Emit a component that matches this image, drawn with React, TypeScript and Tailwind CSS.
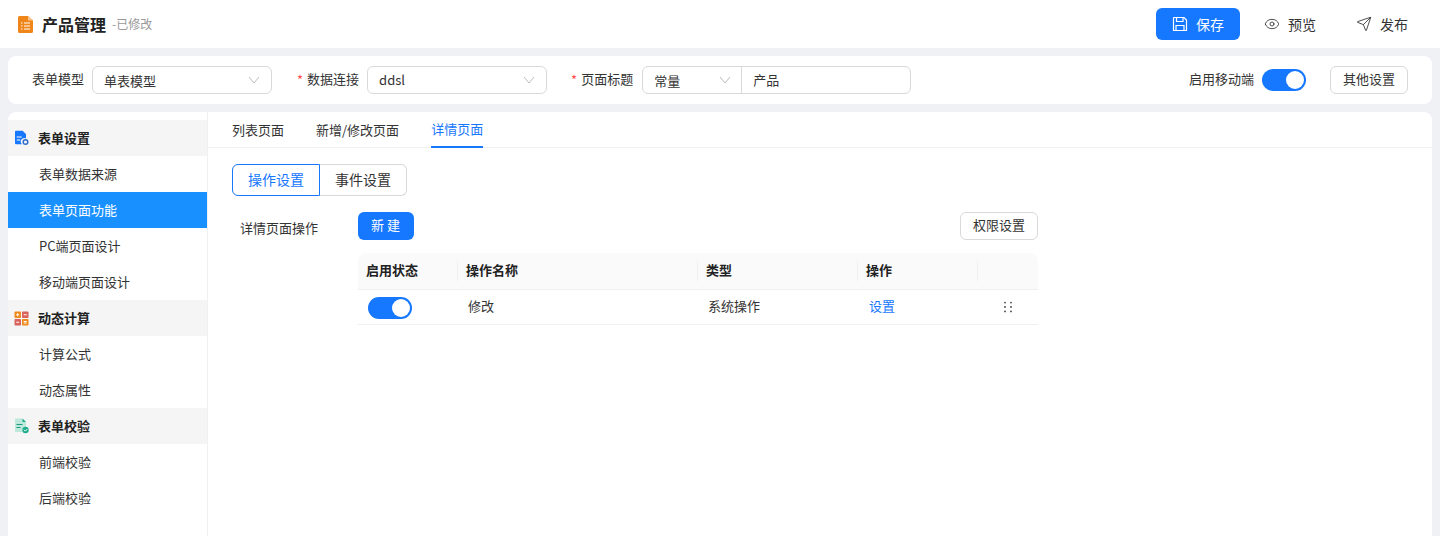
import React from "react";
import { Eye, Send } from "lucide-react";

function Chevron() {
  return (
    <svg width="12" height="8" viewBox="0 0 12 8" fill="none" stroke="#bdbdbd" strokeWidth="1" className="shrink-0">
      <path d="M1 1l5 6 5-6" />
    </svg>
  );
}

function Toggle() {
  return (
    <div className="flex h-[22px] w-[44px] items-center justify-end rounded-full bg-[#1677ff] pr-[2px]">
      <div className="h-[18px] w-[18px] rounded-full bg-white" />
    </div>
  );
}

function Select({ text, cjk }: { text: string; cjk?: boolean }) {
  return (
    <div className="flex h-[28px] w-[180px] items-center justify-between rounded-[6px] border border-[#d9d9d9] bg-white px-[11px] text-[13px] text-[#333]">
      <span className={cjk ? "pt-[2px]" : ""}>{text}</span>
      <Chevron />
    </div>
  );
}

function Req() {
  return <span className="mr-[4px] text-[13px] text-[#ff4d4f]">*</span>;
}

function Group({ icon, title }: { icon: React.ReactNode; title: string }) {
  return (
    <div className="flex h-[36px] items-center bg-[#f5f5f5] pl-[6px] text-[13px] font-bold text-[#222]">
      <span className="mr-[9px] flex w-[15px] items-center justify-center">{icon}</span>
      <span className="pb-[1px]">{title}</span>
    </div>
  );
}

function Item({ title, active }: { title: string; active?: boolean }) {
  return (
    <div className={`flex h-[36px] items-center pb-[1px] pl-[31px] text-[13px] ${active ? "bg-[#1890ff] text-white" : "text-[#333]"}`}>
      {title}
    </div>
  );
}

const FormIcon = () => (
  <svg width="16" height="16" viewBox="0 0 16 16" className="shrink-0">
    <path d="M2 .7h6.500L12 4v4.500a3.500 3.500 0 0 0-4 5.700H2a1 1 0 0 1-1-1V1.700a1 1 0 0 1 1-1z" fill="#1677ff" />
    <rect x="2.700" y="6.500" width="5" height="1" fill="#fff" />
    <rect x="2.700" y="9.500" width="3.500" height="1" fill="#fff" />
    <circle cx="11.500" cy="12" r="2.300" fill="none" stroke="#2f6fc9" strokeWidth="1.500" />
  </svg>
);

const CalcIcon = () => (
  <svg width="15" height="15" viewBox="0 0 15 15" className="shrink-0">
    <rect x="0.500" y="0.500" width="6.500" height="6.500" rx="0.800" fill="#f08a1d" />
    <rect x="8" y="0.500" width="6.500" height="6.500" rx="0.800" fill="#d9625a" />
    <rect x="0.500" y="8" width="6.500" height="6.500" rx="0.800" fill="#d9625a" />
    <rect x="8" y="8" width="6.500" height="6.500" rx="0.800" fill="#f08a1d" />
    <path d="M2.200 3.750h3M3.700 2.250v3M9.700 3.750h3M2.200 11.250h3M9.700 10.500h3M9.700 12h3" stroke="#fff" strokeWidth="1" />
  </svg>
);

const CheckIcon = () => (
  <svg width="16" height="16" viewBox="0 0 16 16" className="shrink-0">
    <path d="M1 .5h7.500L12 4v5a3.500 3.500 0 0 0-3.600 5H1z" fill="#bfe8dc" />
    <path d="M8.500 .5V4H12z" fill="#1fae8c" />
    <rect x="2.500" y="6" width="6" height="1" fill="#1b9c7e" />
    <rect x="2.500" y="9" width="4" height="1" fill="#1b9c7e" />
    <circle cx="11.500" cy="12" r="3.200" fill="#1fae8c" />
    <path d="M10 11.800l1.300 1.300 2-2" stroke="#fff" strokeWidth="1" fill="none" />
  </svg>
);

const SaveIcon = () => (
  <svg width="16" height="16" viewBox="0 0 16 16" fill="none" stroke="#fff" strokeWidth="1.200" className="shrink-0">
    <path d="M2 1.500h10L14.500 4v10.500H1.500V2z" />
    <path d="M4.500 1.500v4h6.500v-4M4 14.500V9.500h8v5" />
  </svg>
);

export default function App() {
  return (
    <div
      className="flex h-[536px] w-[1440px] flex-col overflow-hidden bg-[#f0f1f5] text-[#333]"
      style={{ fontFamily: '"Noto Sans CJK SC", "Noto Sans", sans-serif' }}
    >
      {/* Header */}
      <header className="flex h-[48px] shrink-0 items-center justify-between bg-white pl-[18px] pr-[16px]">
        <div className="flex items-center">
          <svg width="15" height="17" viewBox="0 0 15 17" className="mr-[9px]">
            <path d="M1.500 0H10l5 4.500V15.500A1.500 1.500 0 0 1 13.500 17h-12A1.500 1.500 0 0 1 0 15.500v-14A1.500 1.500 0 0 1 1.500 0z" fill="#f08519" />
            <path d="M10 0l5 4.500h-5z" fill="#f9c48d" />
            <path d="M3 7h1.500M6 7h6M3 10h1.500M6 10h6M3 13h1.500M6 13h6" stroke="#fff" strokeWidth="1.200" />
          </svg>
          <span className="pb-[1px] text-[16px] font-bold leading-none text-[#222]">产品管理</span>
          <span className="ml-[6px] text-[12px] text-[#999]">-已修改</span>
        </div>
        <div className="flex items-center text-[14px]">
          <button className="flex h-[32px] w-[84px] items-center justify-center gap-[8px] rounded-[6px] bg-[#1677ff] text-white">
            <SaveIcon />
            <span>保存</span>
          </button>
          <button className="ml-[8px] flex h-[32px] w-[84px] items-center justify-center gap-[8px] text-[#333]">
            <Eye size={16} strokeWidth={1.300} />
            <span>预览</span>
          </button>
          <button className="ml-[8px] flex h-[32px] w-[84px] items-center justify-center gap-[8px] text-[#333]">
            <Send size={16} strokeWidth={1.300} />
            <span>发布</span>
          </button>
        </div>
      </header>

      {/* Form bar */}
      <div className="mx-[8px] mt-[8px] flex h-[48px] shrink-0 items-center rounded-[8px] bg-white px-[24px] text-[13px]">
        <span className="mr-[8px] pb-[2px]">表单模型</span>
        <Select text="单表模型" cjk />
        <span className="ml-[25px]"><Req /></span>
        <span className="mr-[8px] pb-[2px]">数据连接</span>
        <Select text="ddsl" />
        <span className="ml-[24px]"><Req /></span>
        <span className="mr-[9px] pb-[2px]">页面标题</span>
        <div className="flex h-[28px] w-[269px] items-center rounded-[6px] border border-[#d9d9d9]">
          <div className="flex h-full w-[99px] items-center justify-between border-r border-[#d9d9d9] pl-[11px] pr-[10px]">
            <span className="pt-[2px]">常量</span>
            <Chevron />
          </div>
          <span className="pl-[11px]">产品</span>
        </div>
        <div className="ml-auto flex items-center">
          <span className="mr-[8px] pb-[2px]">启用移动端</span>
          <Toggle />
          <button className="ml-[24px] flex h-[28px] w-[78px] items-center justify-center rounded-[6px] border border-[#d9d9d9] pb-[2px]">其他设置</button>
        </div>
      </div>

      {/* Main */}
      <div className="mx-[8px] mt-[8px] flex min-h-0 flex-1 overflow-hidden rounded-t-[8px] bg-white">
        <aside className="w-[200px] shrink-0 border-r border-[#f0f0f0] pt-[8px]">
          <Group icon={<FormIcon />} title="表单设置" />
          <Item title="表单数据来源" />
          <Item title="表单页面功能" active />
          <Item title="PC端页面设计" />
          <Item title="移动端页面设计" />
          <Group icon={<CalcIcon />} title="动态计算" />
          <Item title="计算公式" />
          <Item title="动态属性" />
          <Group icon={<CheckIcon />} title="表单校验" />
          <Item title="前端校验" />
          <Item title="后端校验" />
        </aside>
        <main className="min-w-0 flex-1">
          <div className="flex h-[36px] gap-[32px] border-b border-[#f0f0f0] pl-[24px] text-[13px]">
            <div className="flex h-[36px] items-center pb-[1px]">列表页面</div>
            <div className="flex h-[36px] items-center pb-[1px]">新增/修改页面</div>
            <div className="flex h-[36px] items-center border-b-2 border-[#1677ff] text-[#1677ff]">详情页面</div>
          </div>
          <div className="pl-[24px] pt-[16px]">
            <div className="flex h-[32px] w-[175px] text-[14px]">
              <div className="flex h-full w-[88px] items-center justify-center rounded-l-[6px] border border-[#1677ff] pb-[2px] text-[#1677ff]">操作设置</div>
              <div className="flex h-full flex-1 items-center justify-center rounded-r-[6px] border border-l-0 border-[#d9d9d9] pb-[2px]">事件设置</div>
            </div>
            <div className="mt-[16px] flex w-[806px]">
              <div className="w-[126px] shrink-0 pl-[8px] pt-[6px] text-[13px]">详情页面操作</div>
              <div className="min-w-0 flex-1">
                <div className="flex items-center justify-between">
                  <button className="flex h-[28px] w-[56px] items-center justify-center rounded-[6px] bg-[#1677ff] pb-[2px] pr-[1px] text-[13px] text-white">新 建</button>
                  <button className="flex h-[28px] w-[78px] items-center justify-center rounded-[6px] border border-[#d9d9d9] pb-[2px] text-[13px]">权限设置</button>
                </div>
                <div className="mt-[13px] text-[13px]">
                  <div className="flex h-[37px] items-center rounded-t-[8px] border-b border-[#f0f0f0] bg-[#fafafa] font-bold text-[#222]">
                    <div className="h-[20px] w-[100px] border-r border-[#f0f0f0] pl-[8px] leading-[18px]">启用状态</div>
                    <div className="h-[20px] w-[240px] border-r border-[#f0f0f0] pl-[8px] leading-[18px]">操作名称</div>
                    <div className="h-[20px] w-[160px] border-r border-[#f0f0f0] pl-[8px] leading-[18px]">类型</div>
                    <div className="h-[20px] w-[120px] border-r border-[#f0f0f0] pl-[8px] leading-[18px]">操作</div>
                  </div>
                  <div className="flex h-[35px] items-center border-b border-[#f0f0f0]">
                    <div className="w-[100px] pl-[10px] pt-[2px]"><Toggle /></div>
                    <div className="w-[240px] pb-[2px] pl-[10px]">修改</div>
                    <div className="w-[160px] pb-[2px] pl-[10px]">系统操作</div>
                    <div className="w-[120px] pb-[2px] pl-[11px] text-[#1677ff]">设置</div>
                    <div className="flex flex-1 justify-center">
                      <svg width="10" height="12" viewBox="0 0 10 12" fill="#444">
                        <circle cx="2" cy="1.600" r="0.900" />
                        <circle cx="8" cy="1.600" r="0.900" />
                        <circle cx="2" cy="6" r="0.900" />
                        <circle cx="8" cy="6" r="0.900" />
                        <circle cx="2" cy="10.400" r="0.900" />
                        <circle cx="8" cy="10.400" r="0.900" />
                      </svg>
                    </div>
                  </div>
                </div>
              </div>
            </div>
          </div>
        </main>
      </div>
    </div>
  );
}
